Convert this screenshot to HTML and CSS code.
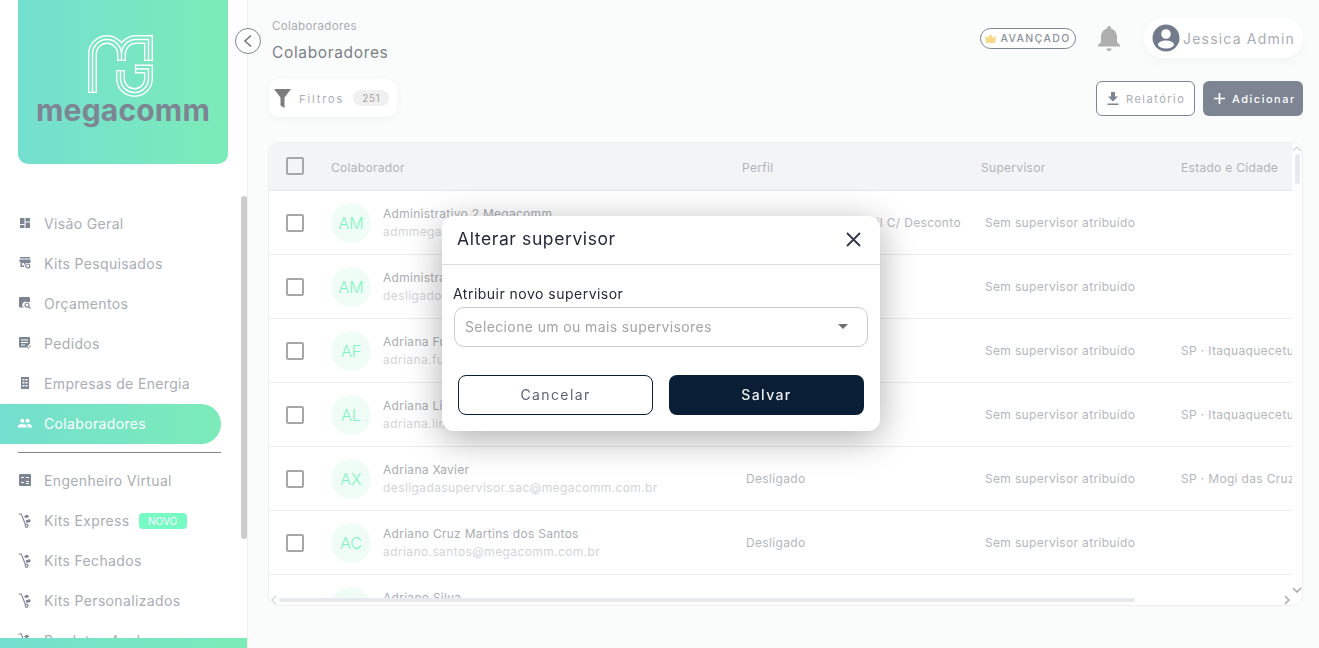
FILE: index.html
```html
<!DOCTYPE html>
<html lang="pt-BR">
<head>
    <meta charset="UTF-8">
    <meta name="viewport" content="width=device-width, initial-scale=1.0">
    <title>Colaboradores</title>
    <link rel="stylesheet" href="styles.css">
</head>
<body>
    <svg class="sprites" width="0" height="0">
        <symbol id="i-dash" viewBox="0 0 12 12"><path d="M1 1h4.500v6H1zM6.500 1H11v3.500H6.500zM6.500 5.500H11V11H6.500zM1 8h4.500v3H1z"/></symbol>
        <symbol id="i-kit" viewBox="0 0 12 12"><path d="M1 0h10v1.500H1zM.500 2.500h11V6H8a3 3 0 0 0-2.800 4H1.500V5h-1zM3 6v2.500h2V6z"/><circle cx="8.700" cy="9" r="2" fill="none" stroke="#7d8593" stroke-width="1.200"/></symbol>
        <symbol id="i-budget" viewBox="0 0 12 12"><path d="M1 0h9a1 1 0 0 1 1 1v4H8a3 3 0 0 0-3 5.500H1a1 1 0 0 1-1-1V1a1 1 0 0 1 1-1z"/><circle cx="8" cy="8" r="2" fill="none" stroke="#7d8593" stroke-width="1.100"/><path d="M9.500 9.500l2 2" stroke="#7d8593" stroke-width="1.100"/></symbol>
        <symbol id="i-order" viewBox="0 0 12 12"><path d="M1 0h9a1 1 0 0 1 1 1v5.500L7.500 10.500H1a1 1 0 0 1-1-1V1a1 1 0 0 1 1-1z"/><path d="M2 3h7M2 5.500h7M2 8h4" stroke="#fff" stroke-width="1"/><path d="M8 10l1.300 1.300L11.800 8.500" fill="none" stroke="#7d8593" stroke-width="1"/></symbol>
        <symbol id="i-build" viewBox="0 0 12 12"><path fill-rule="evenodd" d="M2 0h8v12H2zM3.500 2v1.500h2V2zM6.500 2v1.500h2V2zM3.500 5v1.500h2V5zM6.500 5v1.500h2V5zM3.500 8v1.500h2V8zM6.500 8v1.500h2V8z"/></symbol>
        <symbol id="i-people" viewBox="0 0 16 12"><circle cx="5" cy="3.500" r="2.300"/><circle cx="11" cy="3.500" r="2.300"/><path d="M0 11V9.500C0 7.800 3 7 5 7s5 .8 5 2.500V11zM11 7c2 0 5 .8 5 2.500V11h-4.800V9.500c0-1-.5-1.800-1.300-2.400.4-.1.800-.1 1.100-.1z"/></symbol>
        <symbol id="i-calc" viewBox="0 0 12 12"><path fill-rule="evenodd" d="M1 0h10a1 1 0 0 1 1 1v10a1 1 0 0 1-1 1H1a1 1 0 0 1-1-1V1a1 1 0 0 1 1-1zM2 3v1h3V3zM7 3v1h3V3zM2 8v1h3V8zM7 7v1h3V7zM7 9v1h3V9z"/></symbol>
        <symbol id="i-cart" viewBox="0 0 12 14"><path d="M0 1h2.500l4 10" fill="none" stroke="#7d8593" stroke-width="1"/><path d="M5 3l3-1.500 2 2-3 1.500zM6.500 7l4-1.500 1 2.500-4 1.500z"/><circle cx="7.500" cy="12" r="1.400" fill="none" stroke="#7d8593" stroke-width="1"/></symbol>
    </svg>

    <div class="app">
        <aside class="sidebar">
            <div class="logo">
                <svg class="logo-mark" viewBox="80 30 80 68" width="80" height="68">
                    <defs>
                        <path id="mark" d="M92.500 93V54a14.500 14.500 0 0 1 29 0v7M121.500 54a14.500 14.500 0 0 1 14.500-14.500h12.500V61M120.500 70v8.500a14 14 0 0 0 28 0V69H135"/>
                    </defs>
                    <g fill="none">
                        <use href="#mark" stroke="#fff" stroke-width="9"/>
                        <use href="#mark" stroke="#78e6c0" stroke-width="6.200"/>
                        <use href="#mark" stroke="#fff" stroke-width="1.500"/>
                        <path d="M88 92.400h9M117 60.400h9M144 60.400h9M116 70.600h9M135.600 64.500v9" stroke="#fff" stroke-width="1.400"/>
                    </g>
                </svg>
                <div class="logo-text">megacomm</div>
            </div>
            <nav class="nav">
                <a class="nav-item"><svg class="nav-icon"><use href="#i-dash"/></svg>Visão Geral</a>
                <a class="nav-item"><svg class="nav-icon"><use href="#i-kit"/></svg>Kits Pesquisados</a>
                <a class="nav-item"><svg class="nav-icon"><use href="#i-budget"/></svg>Orçamentos</a>
                <a class="nav-item"><svg class="nav-icon"><use href="#i-order"/></svg>Pedidos</a>
                <a class="nav-item"><svg class="nav-icon"><use href="#i-build"/></svg>Empresas de Energia</a>
                <a class="nav-item active"><svg class="nav-icon"><use href="#i-people"/></svg>Colaboradores</a>
                <hr class="nav-line">
                <a class="nav-item"><svg class="nav-icon"><use href="#i-calc"/></svg>Engenheiro Virtual</a>
                <a class="nav-item"><svg class="nav-icon nav-icon-cart"><use href="#i-cart"/></svg>Kits Express <span class="tag-new">NOVO</span></a>
                <a class="nav-item"><svg class="nav-icon nav-icon-cart"><use href="#i-cart"/></svg>Kits Fechados</a>
                <a class="nav-item"><svg class="nav-icon nav-icon-cart"><use href="#i-cart"/></svg>Kits Personalizados</a>
                <a class="nav-item"><svg class="nav-icon nav-icon-cart"><use href="#i-cart"/></svg>Produtos Avulsos</a>
            </nav>
            <div class="sidebar-foot"></div>
            <div class="sidebar-thumb"></div>
        </aside>

        <button class="collapse-btn">
            <svg width="12" height="14" viewBox="0 0 12 14"><path d="M9 1.500L3 7l6 5.500" fill="none" stroke="#6f7786" stroke-width="1.600"/></svg>
        </button>

        <main class="main">
            <header class="topbar">
                <div>
                    <div class="crumb">Colaboradores</div>
                    <h1>Colaboradores</h1>
                </div>
                <div class="top-right">
                    <span class="plan">
                        <svg width="11" height="9" viewBox="0 0 11 9"><path d="M0 1.500l2.800 2.300L5.500 0l2.700 3.800L11 1.500 10 9H1z" fill="#f7d98a"/></svg>
                        AVANÇADO
                    </span>
                    <svg class="bell" width="24" height="26" viewBox="0 0 24 26"><path d="M12 1a2 2 0 0 1 2 2v.600c3.700 1 6 4.200 6 8.400v5l3 3v1.500H1V20l3-3v-5c0-4.200 2.300-7.400 6-8.400V3a2 2 0 0 1 2-2zM9.500 23.500h5a2.500 2.500 0 0 1-5 0z" fill="#aeaeae"/></svg>
                    <div class="user">
                        <svg width="28" height="28" viewBox="0 0 28 28"><circle cx="14" cy="14" r="13.500" fill="#727b8b"/><circle cx="14" cy="10" r="4.800" fill="#fff"/><ellipse cx="14" cy="20.500" rx="8" ry="4" fill="#fff"/></svg>
                        <span>Jessica Admin</span>
                    </div>
                </div>
            </header>

            <div class="toolbar">
                <div class="filter">
                    <svg width="17" height="19" viewBox="0 0 17 19"><path d="M0 0h17l-6.500 8.500V19l-4-2.500v-8z" fill="#7c7c7c"/></svg>
                    <span class="filter-label">Filtros</span>
                    <span class="count">251</span>
                </div>
                <div class="actions">
                    <button class="btn-outline">
                        <svg width="12" height="13" viewBox="0 0 12 13"><path d="M4 0h4v4.500h3L6 9.500 1 4.500h3zM.500 11.500h11V13H.500z" fill="#7d8593"/></svg>
                        Relatório
                    </button>
                    <button class="btn-solid">
                        <svg width="11" height="11" viewBox="0 0 11 11"><path d="M5.500 0v11M0 5.500h11" stroke="#fff" stroke-width="1.700"/></svg>
                        Adicionar
                    </button>
                </div>
            </div>

            <section class="card">
                <div class="table-scroll">
                    <table class="people">
                        <colgroup>
                            <col class="col-check"><col class="col-name"><col class="col-profile"><col class="col-sup"><col class="col-state">
                        </colgroup>
                        <thead>
                            <tr>
                                <th><span class="check"></span></th>
                                <th>Colaborador</th>
                                <th>Perfil</th>
                                <th>Supervisor</th>
                                <th>Estado e Cidade</th>
                            </tr>
                        </thead>
                        <tbody>
                            <tr>
                                <td><span class="check"></span></td>
                                <td><div class="person"><span class="avatar">AM</span><div><div class="name">Administrativo 2 Megacomm</div><div class="mail">admmegacomm@megacomm.com.br</div></div></div></td>
                                <td class="cell-in">Administrativo III Brasil C/ Desconto</td>
                                <td class="cell-in">Sem supervisor atribuído</td>
                                <td></td>
                            </tr>
                            <tr>
                                <td><span class="check"></span></td>
                                <td><div class="person"><span class="avatar">AM</span><div><div class="name">Administrativo Megacomm</div><div class="mail">desligado@megacomm.com.br</div></div></div></td>
                                <td class="cell-in">Desligado</td>
                                <td class="cell-in">Sem supervisor atribuído</td>
                                <td></td>
                            </tr>
                            <tr>
                                <td><span class="check"></span></td>
                                <td><div class="person"><span class="avatar">AF</span><div><div class="name">Adriana Fujita</div><div class="mail">adriana.fujita@megacomm.com.br</div></div></div></td>
                                <td class="cell-in">Desligado</td>
                                <td class="cell-in">Sem supervisor atribuído</td>
                                <td>SP · Itaquaquecetuba</td>
                            </tr>
                            <tr>
                                <td><span class="check"></span></td>
                                <td><div class="person"><span class="avatar">AL</span><div><div class="name">Adriana Lima</div><div class="mail">adriana.lima@megacomm.com.br</div></div></div></td>
                                <td class="cell-in">Desligado</td>
                                <td class="cell-in">Sem supervisor atribuído</td>
                                <td>SP · Itaquaquecetuba</td>
                            </tr>
                            <tr>
                                <td><span class="check"></span></td>
                                <td><div class="person"><span class="avatar">AX</span><div><div class="name">Adriana Xavier</div><div class="mail">desligadasupervisor.sac@megacomm.com.br</div></div></div></td>
                                <td class="cell-in">Desligado</td>
                                <td class="cell-in">Sem supervisor atribuído</td>
                                <td>SP · Mogi das Cruzes</td>
                            </tr>
                            <tr>
                                <td><span class="check"></span></td>
                                <td><div class="person"><span class="avatar">AC</span><div><div class="name">Adriano Cruz Martins dos Santos</div><div class="mail">adriano.santos@megacomm.com.br</div></div></div></td>
                                <td class="cell-in">Desligado</td>
                                <td class="cell-in">Sem supervisor atribuído</td>
                                <td></td>
                            </tr>
                            <tr>
                                <td><span class="check"></span></td>
                                <td><div class="person"><span class="avatar">AS</span><div><div class="name">Adriano Silva</div><div class="mail">adriano.silva@megacomm.com.br</div></div></div></td>
                                <td class="cell-in">Desligado</td>
                                <td class="cell-in">Sem supervisor atribuído</td>
                                <td></td>
                            </tr>
                        </tbody>
                    </table>
                </div>
                <div class="hbar"></div>
                <div class="vbar"></div>
                <svg class="arrow arrow-up" width="10" height="6" viewBox="0 0 10 6"><path d="M1 5l4-4 4 4" fill="none" stroke="#d5d8dc" stroke-width="1.500"/></svg>
                <svg class="arrow arrow-down" width="10" height="6" viewBox="0 0 10 6"><path d="M1 1l4 4 4-4" fill="none" stroke="#a8a8a8" stroke-width="1.500"/></svg>
                <svg class="arrow arrow-left" width="6" height="10" viewBox="0 0 6 10"><path d="M5 1L1 5l4 4" fill="none" stroke="#d5d8dc" stroke-width="1.500"/></svg>
                <svg class="arrow arrow-right" width="6" height="10" viewBox="0 0 6 10"><path d="M1 1l4 4-4 4" fill="none" stroke="#a8a8a8" stroke-width="1.500"/></svg>
            </section>
        </main>
    </div>

    <div class="modal-wrap">
        <div class="modal">
            <div class="modal-head">
                <h2>Alterar supervisor</h2>
                <svg class="modal-close" width="15" height="15" viewBox="0 0 15 15"><path d="M1 1l13 13M14 1L1 14" stroke="#33364a" stroke-width="1.800"/></svg>
            </div>
            <div class="modal-body">
                <label class="field-label">Atribuir novo supervisor</label>
                <div class="select">
                    <span>Selecione um ou mais supervisores</span>
                    <svg width="10" height="5" viewBox="0 0 10 5"><path d="M0 0h10L5 5z" fill="#6f6f6f"/></svg>
                </div>
                <div class="modal-actions">
                    <button class="btn-cancel">Cancelar</button>
                    <button class="btn-save">Salvar</button>
                </div>
            </div>
        </div>
    </div>
</body>
</html>
```

FILE: styles.css
```css
* {
    box-sizing: border-box;
}
body {
    font-family: Inter, "Open Sans", sans-serif;
    margin: 0;
    height: 100vh;
    overflow: hidden;
    background-color: #fafbfb;
    color: #a9adb5;
}
button {
    font-family: inherit;
    cursor: pointer;
}
.sprites {
    position: absolute;
}
.app {
    display: flex;
    height: 648px;
    position: relative;
}

/* sidebar */
.sidebar {
    width: 248px;
    flex-shrink: 0;
    display: flex;
    flex-direction: column;
    background-color: white;
    border-right: 1px solid #eeeeee;
    position: relative;
    overflow: hidden;
}
.logo {
    margin: 0 19px 40px 18px;
    height: 164px;
    flex-shrink: 0;
    border-radius: 0 0 10px 10px;
    background: linear-gradient(90deg, #74dfcf, #7cebb8);
    display: flex;
    flex-direction: column;
    align-items: center;
    padding-top: 30px;
}
.logo-mark {
    display: block;
    margin-right: 6px;
}
.logo-text {
    margin-top: -5px;
    font-size: 30px;
    line-height: 34px;
    font-weight: 700;
    letter-spacing: 0.2px;
    color: #7d8593;
}
.nav {
    flex: 1;
    overflow: hidden;
}
.nav-item {
    height: 40px;
    width: 221px;
    padding: 0 0 2px 18px;
    display: flex;
    align-items: center;
    font-size: 14px;
    letter-spacing: 0.35px;
    color: #a9adb5;
}
.nav-item.active {
    color: white;
    border-radius: 0 20px 20px 0;
    background: linear-gradient(90deg, #74dfcf, #7cebb8);
}
.nav-icon {
    width: 14px;
    height: 12px;
    margin-right: 12px;
    fill: #7d8593;
}
.nav-icon-cart {
    height: 15px;
}
.active .nav-icon {
    fill: white;
}
.nav-line {
    margin: 8px 0 8px 18px;
    width: 203px;
    border: none;
    border-top: 1px solid #7d8593;
}
.tag-new {
    margin: 2px 0 0 9px;
    width: 48px;
    height: 16px;
    border-radius: 4px;
    background-color: #75fbc3;
    color: white;
    font-size: 10px;
    letter-spacing: 0;
    display: flex;
    align-items: center;
    justify-content: center;
}
.sidebar-foot {
    height: 10px;
    flex-shrink: 0;
    background: linear-gradient(90deg, #74dfcf, #7cebb8);
}
.sidebar-thumb {
    position: absolute;
    left: 241px;
    top: 196px;
    width: 6px;
    height: 343px;
    border-radius: 3px;
    background-color: #cccccc;
}
.collapse-btn {
    position: absolute;
    left: 235px;
    top: 28px;
    width: 26px;
    height: 26px;
    padding: 0;
    border-radius: 50%;
    border: 1px solid #7d8593;
    background-color: white;
    display: flex;
    align-items: center;
    justify-content: center;
}

/* main */
.main {
    flex: 1;
    min-width: 0;
    padding: 18px 16px 0 20px;
}
.topbar {
    display: flex;
    justify-content: space-between;
    height: 61px;
    padding-left: 4px;
}
.crumb {
    font-size: 11.500px;
    line-height: 16px;
    letter-spacing: 0.38px;
}
h1 {
    margin: 9px 0 0;
    font-size: 15.500px;
    line-height: 20px;
    font-weight: 400;
    letter-spacing: 0.65px;
    color: #7b7f88;
}
.top-right {
    display: flex;
    align-items: flex-start;
}
.plan {
    margin-top: 10px;
    width: 96px;
    height: 21px;
    border: 1px solid #7d8593;
    border-radius: 11px;
    display: flex;
    align-items: center;
    justify-content: center;
    gap: 4px;
    font-size: 10.500px;
    font-weight: 500;
    letter-spacing: 1.350px;
    color: #8c919b;
    background-color: white;
    white-space: nowrap;
}
.bell {
    margin: 7px 23px 0 21px;
}
.user {
    width: 159px;
    height: 40px;
    border-radius: 20px;
    background-color: white;
    box-shadow: 0 4px 12px rgba(0,0,0,0.03);
    display: flex;
    align-items: center;
    padding-left: 8px;
    gap: 3px;
    font-size: 14px;
    letter-spacing: 1.2px;
    white-space: nowrap;
}
.toolbar {
    display: flex;
    justify-content: space-between;
    height: 63px;
    margin-left: 1px;
}
.filter {
    width: 128px;
    height: 38px;
    border-radius: 10px;
    background-color: white;
    box-shadow: 0 2px 10px rgba(0,0,0,0.04);
    display: flex;
    align-items: center;
    padding-left: 5px;
}
.filter-label {
    margin-left: 8px;
    padding-top: 2px;
    font-size: 11px;
    letter-spacing: 1.900px;
}
.count {
    margin-left: 9px;
    width: 36px;
    height: 16px;
    border-radius: 8px;
    background-color: #f0f0f0;
    font-size: 10px;
    letter-spacing: 0.6px;
    color: #a3a3a3;
    display: flex;
    align-items: center;
    justify-content: center;
}
.actions {
    display: flex;
    gap: 8px;
    padding-top: 2px;
}
.btn-outline, .btn-solid {
    height: 35px;
    border-radius: 6px;
    display: flex;
    align-items: center;
    font-size: 11px;
    white-space: nowrap;
}
.btn-outline {
    width: 99px;
    padding: 0 0 0 10px;
    gap: 7px;
    border: 1px solid #7d8593;
    background-color: white;
    color: #a9adb5;
    letter-spacing: 1.500px;
}
.btn-solid {
    width: 100px;
    padding: 0 0 0 11px;
    gap: 7px;
    border: none;
    background-color: #7d8593;
    color: white;
    font-weight: 500;
    letter-spacing: 1.500px;
}
.card {
    position: relative;
    height: 464px;
    border: 1px solid #efefef;
    border-radius: 10px;
    background-color: white;
    overflow: hidden;
}
.table-scroll {
    width: 1023px;
    height: 455px;
    overflow: hidden;
}
.people {
    width: 1024px;
    table-layout: fixed;
    border-collapse: collapse;
}
.col-check {
    width: 62px;
}
.col-name {
    width: 411px;
}
.col-profile {
    width: 239px;
}
.col-sup {
    width: 200px;
}
.col-state {
    width: 112px;
}
th {
    height: 47px;
    padding: 3px 0 0;
    text-align: left;
    font-size: 12px;
    font-weight: 400;
    letter-spacing: 0.3px;
    color: #b0b3b9;
    background-color: #f3f4f6;
    border-bottom: 1px solid #e6e6e8;
    white-space: nowrap;
}
th .check {
    margin-top: -3px;
}
td {
    height: 64px;
    padding: 0;
    font-size: 12px;
    letter-spacing: 0.33px;
    border-bottom: 1px solid #ececec;
    white-space: nowrap;
    overflow: hidden;
    color: #b4b7bd;
}
td.cell-in {
    padding-left: 4px;
}
td .check {
    margin-top: 2px;
}
.check {
    display: block;
    margin-left: 17px;
    width: 18px;
    height: 18px;
    border: 2px solid #a8a8a8;
    border-radius: 2px;
}
.person {
    display: flex;
    align-items: center;
    gap: 12px;
    padding-top: 2px;
}
.avatar {
    width: 40px;
    height: 40px;
    border-radius: 50%;
    background-color: #effdf6;
    color: #7cf5c2;
    font-size: 16px;
    font-weight: 300;
    display: flex;
    align-items: center;
    justify-content: center;
    flex-shrink: 0;
    letter-spacing: 0;
}
.name {
    font-size: 12px;
    line-height: 18px;
    letter-spacing: 0.28px;
    color: #a9adb5;
}
.mail {
    font-size: 12px;
    line-height: 18px;
    letter-spacing: 0.4px;
    color: #d2d4d8;
}
.hbar {
    position: absolute;
    left: 10px;
    top: 455px;
    width: 856px;
    height: 4px;
    border-radius: 2px;
    background-color: #e6eaee;
}
.vbar {
    position: absolute;
    left: 1026px;
    top: 11px;
    width: 5px;
    height: 30px;
    border-radius: 3px;
    background-color: #e6eaee;
}
.arrow {
    position: absolute;
}
.arrow-up {
    left: 1023px;
    top: 3px;
}
.arrow-down {
    left: 1023px;
    top: 444px;
}
.arrow-left {
    left: 2px;
    top: 452px;
}
.arrow-right {
    left: 1015px;
    top: 452px;
}

/* modal */
.modal-wrap {
    position: fixed;
    inset: 0;
    display: flex;
    align-items: center;
    justify-content: center;
    padding: 0 0 1px 3px;
}
.modal {
    width: 438px;
    height: 215px;
    border-radius: 12px;
    background-color: white;
    box-shadow: 0 8px 36px rgba(0,0,0,0.32);
}
.modal-head {
    height: 49px;
    padding: 0 19px 4px 15px;
    display: flex;
    align-items: center;
    justify-content: space-between;
    border-bottom: 1px solid #dedede;
}
.modal-close {
    margin-top: 2px;
}
h2 {
    margin: 0;
    font-size: 17.500px;
    font-weight: 400;
    letter-spacing: 0.6px;
    color: #26283a;
}
.modal-body {
    padding: 20px 12px 0 11px;
}
.field-label {
    display: block;
    font-size: 14px;
    line-height: 18px;
    letter-spacing: 0.48px;
    color: #26283a;
}
.select {
    margin: 4px 0 0 1px;
    height: 40px;
    border: 1px solid #cdcdcd;
    border-radius: 10px;
    display: flex;
    align-items: center;
    justify-content: space-between;
    padding: 0 19px 1px 10px;
    font-size: 14px;
    letter-spacing: 0.38px;
    color: #a4a4a4;
}
.modal-actions {
    display: flex;
    gap: 16px;
    margin: 28px 0 0 5px;
}
.btn-cancel, .btn-save {
    width: 195px;
    height: 40px;
    padding: 0 0 2px;
    border-radius: 8px;
    font-size: 14px;
    letter-spacing: 1.400px;
}
.btn-cancel {
    border: 1px solid #0a1f36;
    background-color: white;
    color: #5b6475;
}
.btn-save {
    border: none;
    background-color: #0a1f36;
    color: #eef0f2;
    font-weight: 500;
}
```
